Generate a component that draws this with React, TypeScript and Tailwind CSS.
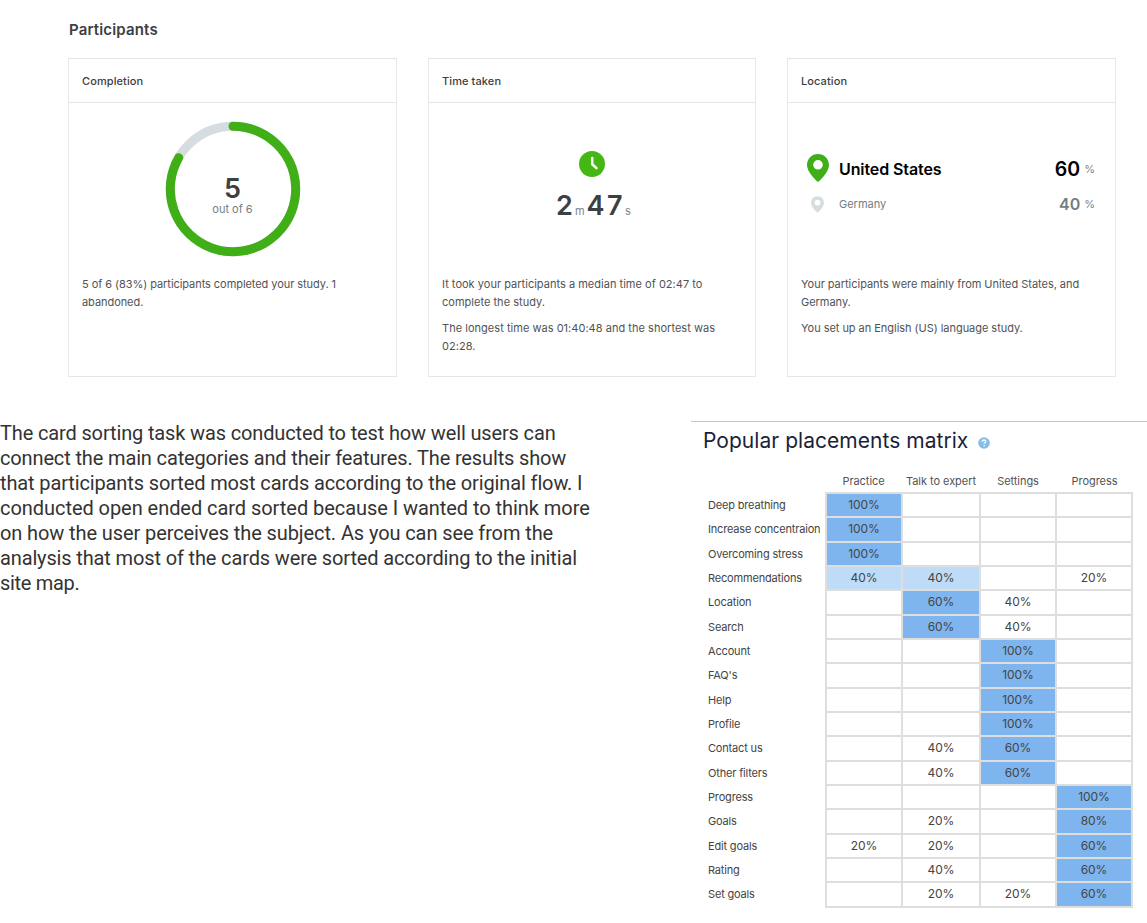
import type { ReactNode } from "react";

type Row = [string, number, number, number, number];

const rows: Row[] = [
  ["Deep breathing", 100, 0, 0, 0],
  ["Increase concentraion", 100, 0, 0, 0],
  ["Overcoming stress", 100, 0, 0, 0],
  ["Recommendations", 40, 40, 0, 20],
  ["Location", 0, 60, 40, 0],
  ["Search", 0, 60, 40, 0],
  ["Account", 0, 0, 100, 0],
  ["FAQ's", 0, 0, 100, 0],
  ["Help", 0, 0, 100, 0],
  ["Profile", 0, 0, 100, 0],
  ["Contact us", 0, 40, 60, 0],
  ["Other filters", 0, 40, 60, 0],
  ["Progress", 0, 0, 0, 100],
  ["Goals", 0, 20, 0, 80],
  ["Edit goals", 20, 20, 0, 60],
  ["Rating", 0, 40, 0, 60],
  ["Set goals", 0, 20, 20, 60],
];

function cellColor(row: Row, value: number) {
  if (value >= 60) return "bg-[#7eb5ee]";
  if (value === 40 && row[0] === "Recommendations") return "bg-[#bedcf8]";
  return "bg-white";
}

function Card({ title, visual, children }: { title: string; visual: ReactNode; children: ReactNode }) {
  return (
    <section className="flex h-[319px] flex-col border border-[#e6e6e6]">
      <h3 className="flex h-[44px] shrink-0 items-center border-b border-[#e6e6e6] pt-[2px] pl-[13px] text-[11px] font-medium tracking-[0.1px] text-[#3d4042]">
        <span>{title}</span>
      </h3>
      <div className="h-[173px] shrink-0">{visual}</div>
      <div className="flex flex-col gap-[9px] pl-[13px] text-[11px] leading-[17.6px] whitespace-nowrap text-[#505356]">{children}</div>
    </section>
  );
}

function Pin({ className }: { className: string }) {
  return (
    <svg viewBox="0 0 22 28" className={className} fill="currentColor">
      <path
        fillRule="evenodd"
        d="M11 0C4.900 0 0 4.900 0 11c0 3.500 2 6.800 4.500 10.300C6.500 24 9 26.500 11 28c2-1.500 4.500-4 6.500-6.700C20 17.800 22 14.500 22 11 22 4.900 17.100 0 11 0Zm0 6a4.800 4.800 0 1 1 0 9.600A4.800 4.800 0 0 1 11 6Z"
      />
    </svg>
  );
}

export default function App() {
  return (
    <main className="h-[923px] w-[1147px] overflow-hidden bg-white font-['Inter',sans-serif]">
      <h2 className="ml-[69px] flex h-[58px] items-center pt-[2px] text-[15px] font-semibold tracking-[0.15px] text-[#3d4042]">Participants</h2>
      <div className="ml-[68px] grid grid-cols-[329px_328px_329px] gap-[31px]">
        <Card
          title="Completion"
          visual={
            <div className="grid h-full pt-[18px]">
              <svg viewBox="0 0 136 136" className="col-start-1 row-start-1 ml-[96px] size-[136px]" fill="none" strokeWidth="9">
                <circle cx="68" cy="68" r="62.700" stroke="#d5dde0" />
                <path d="M68 5.300A62.700 62.700 0 1 1 13.700 36.650" stroke="#3fae17" strokeLinecap="round" />
              </svg>
              <div className="col-start-1 row-start-1 flex flex-col items-center pt-[54px]">
                <span className="text-[27px] leading-[27px] font-semibold text-[#3d4042]">5</span>
                <span className="text-[11px] leading-[14px] text-[#757d82]">out of 6</span>
              </div>
            </div>
          }
        >
          <p className="tracking-[-0.06px]">
            5 of 6 (83%) participants completed your study. 1<br />
            abandoned.
          </p>
        </Card>
        <Card
          title="Time taken"
          visual={
            <div className="flex flex-col items-center pt-[48px]">
              <svg viewBox="0 0 26 26" className="size-[26px]" fill="none">
                <circle cx="13" cy="13" r="13" fill="#44b715" />
                <path d="M13.200 7v6.200l4.300 3.900" stroke="white" strokeWidth="2.500" strokeLinecap="round" strokeLinejoin="round" />
              </svg>
              <div className="mt-[13px] flex items-baseline pl-[3px] text-[27px] leading-[32px] font-semibold text-[#3d4042]">
                <span>2</span>
                <span className="mx-[2px] text-[11px] font-normal text-[#7d868b]">m</span>
                <span className="tracking-[2.500px]">47</span>
                <span className="text-[11px] font-normal text-[#7d868b]">s</span>
              </div>
            </div>
          }
        >
          <p className="tracking-[0.02px]">
            It took your participants a median time of 02:47 to
            <br />
            complete the study.
          </p>
          <p className="tracking-[0.03px]">
            The longest time was 01:40:48 and the shortest was
            <br />
            02:28.
          </p>
        </Card>
        <Card
          title="Location"
          visual={
            <div className="flex flex-col pt-[50px] pr-[20px] pl-[19px]">
              <div className="flex h-[32px] items-center">
                <Pin className="mb-[2px] h-[28px] w-[22px] text-[#3fae17]" />
                <span className="ml-[10px] text-[16px] font-semibold tracking-[-0.1px] text-black">United States</span>
                <span className="ml-auto pt-[1px] text-[19.500px] font-semibold text-black">60</span>
                <span className="ml-[4px] text-[11px] text-[#7d868b]">%</span>
              </div>
              <div className="mt-[4px] flex h-[30px] items-center">
                <Pin className="ml-[4px] h-[17px] w-[13px] text-[#d5dde0]" />
                <span className="ml-[15px] text-[11px] text-[#757d82]">Germany</span>
                <span className="ml-auto text-[16px] font-semibold text-[#757d82]">40</span>
                <span className="ml-[4px] text-[11px] text-[#7d868b]">%</span>
              </div>
            </div>
          }
        >
          <p className="tracking-[-0.03px]">
            Your participants were mainly from United States, and
            <br />
            Germany.
          </p>
          <p className="tracking-[-0.04px]">You set up an English (US) language study.</p>
        </Card>
      </div>
      <div className="mt-[44px] flex items-start justify-between">
        <p className="font-['Roboto',sans-serif] text-[20px] leading-[25px] whitespace-nowrap text-[#333]">
          <span className="tracking-[-0.14px]">The card sorting task was conducted to test how well users can</span><br />
          <span className="tracking-[-0.14px]">connect the main categories and their features. The results show</span><br />
          <span className="tracking-[-0.13px]">that participants sorted most cards according to the original flow. I</span><br />
          <span className="tracking-[-0.05px]">conducted open ended card sorted because I wanted to think more</span><br />
          <span className="tracking-[-0.1px]">on how the user perceives the subject. As you can see from the</span><br />
          <span className="tracking-[-0.14px]">analysis that most of the cards were sorted according to the initial</span><br />
          <span className="tracking-[-0.3px]">site map.</span>
        </p>
        <section className="w-[456px] border-t border-[#c8c8c8]">
          <h2 className="flex h-[38px] items-center pl-[12px] text-[21px] tracking-[0.04px] text-[#1b1f3b]">
            <span>Popular placements matrix</span>
            <svg viewBox="0 0 12 12" className="mt-[4px] ml-[10px] size-[12px]" fill="none">
              <circle cx="6" cy="6" r="5.800" fill="#86bde6" />
              <path d="M4.200 4.700c0-1.100.8-1.700 1.800-1.700s1.800.6 1.800 1.500c0 1.100-1.600 1.200-1.600 2.300M6.200 8v1.200" stroke="white" strokeWidth="1.300" />
            </svg>
          </h2>
          <div className="ml-[134px] grid h-[32px] grid-cols-[77px_78px_76px_77px] items-end pb-[3px] text-center text-[11px] tracking-[-0.05px] whitespace-nowrap text-[#505356]">
            <span>Practice</span>
            <span>Talk to expert</span>
            <span>Settings</span>
            <span>Progress</span>
          </div>
          <div className="flex">
            <div className="flex w-[134px] flex-col pt-[1px] pl-[17px] text-[11px] tracking-[-0.17px] whitespace-nowrap text-[#444]">
              {rows.map((r) => (
                <span key={r[0]} className="h-[24.330px] leading-[24px]">{r[0]}</span>
              ))}
            </div>
            <div className="flex flex-col border-r-2 border-b-2 border-[#dedede]">
              {rows.map((r) => (
                <div key={r[0]} className="grid h-[24.330px] grid-cols-[76px_78px_76px_76px] text-[12px] leading-[22px] tracking-[-0.1px] text-[#444]">
                  {([r[1], r[2], r[3], r[4]]).map((v, i) => (
                    <div key={i} className={`border-t-2 border-l-2 border-[#dedede] text-center ${cellColor(r, v)}`}>
                      {v > 0 ? `${v}%` : ""}
                    </div>
                  ))}
                </div>
              ))}
            </div>
          </div>
        </section>
      </div>
    </main>
  );
}
